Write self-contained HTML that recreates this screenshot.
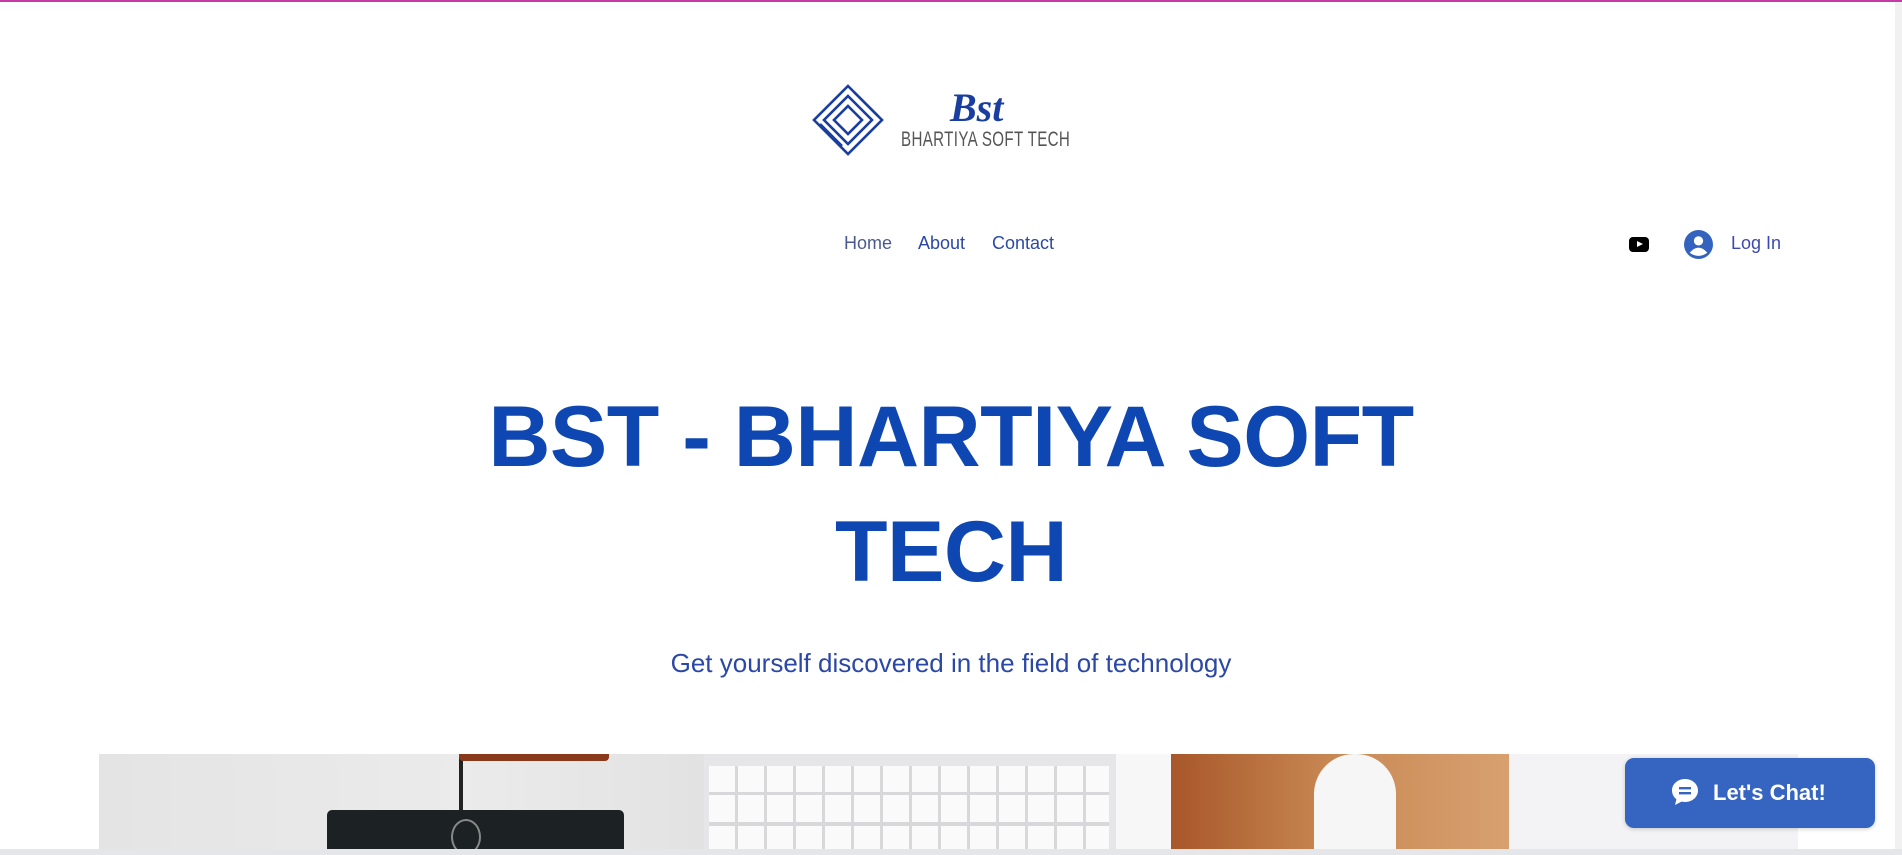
<!DOCTYPE html>
<html><head><meta charset="utf-8"><style>
*{margin:0;padding:0;box-sizing:border-box}
body{width:1902px;height:855px;overflow:hidden;background:#fff;font-family:"Liberation Sans",sans-serif;position:relative}
.a{position:absolute}
.nav{font-size:18px;color:#2b48a6;top:233px}
</style></head><body>
<div class="a" style="left:0;top:0;width:1902px;height:2px;background:#c43aa6"></div>
<div class="a" style="left:1895px;top:2px;width:7px;height:853px;background:#f1f1f1"></div>
<!-- logo -->
<svg class="a" style="left:812px;top:84px" width="72" height="72" viewBox="0 0 72 72" fill="none" stroke="#1a3ea0" stroke-width="2.6">
<path d="M36 2 L70 36 L36 70 L2 36 Z"/>
<path d="M36 12 L60 36 L36 60 L12 36 Z"/>
<path d="M36 22 L50 36 L36 50 L22 36 Z"/>
<path d="M42 8 L66 32 M8 40 L30 62"/>
</svg>
<div class="a" style="left:950px;top:84px;font-family:'Liberation Serif',serif;font-style:italic;font-weight:bold;font-size:40px;color:#1a3ea0">Bst</div>
<div class="a" style="left:901px;top:128px;font-size:21px;color:#555;letter-spacing:0.5px;transform:scaleX(0.72);transform-origin:left">BHARTIYA SOFT TECH</div>
<!-- nav -->
<div class="a nav" style="left:844px;color:#4a5a90">Home</div>
<div class="a nav" style="left:918px">About</div>
<div class="a nav" style="left:992px">Contact</div>
<div class="a" style="left:1629px;top:237px;width:20px;height:15px;background:#000;border-radius:4px"></div>
<div class="a" style="left:1637px;top:241px;width:0;height:0;border-left:6px solid #fff;border-top:3.5px solid transparent;border-bottom:3.5px solid transparent"></div>
<svg class="a" style="left:1684px;top:230px" width="29" height="29" viewBox="0 0 28 28"><circle cx="14" cy="14" r="14" fill="#3463bf"/><circle cx="14" cy="10.5" r="4.5" fill="#fff"/><path d="M5.5 22 Q14 12 22.5 22 Q14 28 5.5 22Z" fill="#fff"/></svg>
<div class="a nav" style="left:1731px;color:#3a48b0">Log In</div>
<!-- heading -->
<div class="a" style="left:0;width:1902px;top:380px;text-align:center;font-size:86px;line-height:115px;color:#0f47b2;font-weight:bold;letter-spacing:-0.5px">BST - BHARTIYA SOFT<br>TECH</div>
<div class="a" style="left:0;width:1902px;top:648px;text-align:center;font-size:26px;color:#2b48a6">Get yourself discovered in the field of technology</div>
<!-- image -->
<div class="a" style="left:99px;top:754px;width:1699px;height:101px;background:#f3f3f5;overflow:hidden">
<div class="a" style="left:0;top:0;width:605px;height:101px;background:linear-gradient(90deg,#e4e4e4,#ebebeb 60%,#e2e2e2)"></div>
<div class="a" style="left:360px;top:0;width:4px;height:60px;background:#222"></div>
<div class="a" style="left:360px;top:0;width:150px;height:7px;background:#8a3a1c;border-radius:0 0 4px 4px"></div>
<div class="a" style="left:228px;top:56px;width:297px;height:60px;background:#1c2124;border-radius:5px"></div>
<div class="a" style="left:352px;top:65px;width:30px;height:36px;border:2px solid #888;border-radius:50%"></div>
<div class="a" style="left:605px;top:0;width:412px;height:101px;background:#e6e6e8"></div>
<div class="a" style="left:610px;top:12px;width:400px;height:100px;background:repeating-linear-gradient(90deg,#fafafa 0 26px,#d8d8da 26px 29px)"></div>
<div class="a" style="left:610px;top:38px;width:400px;height:3px;background:#d8d8da"></div>
<div class="a" style="left:610px;top:68px;width:400px;height:4px;background:#d8d8da"></div>
<div class="a" style="left:1017px;top:0;width:55px;height:101px;background:#f7f7f7"></div>
<div class="a" style="left:1072px;top:0;width:338px;height:101px;background:linear-gradient(90deg,#a8572a,#c98a55 50%,#d8a070)"></div>
<div class="a" style="left:1215px;top:0;width:82px;height:110px;background:#f6f6f6;border-radius:40px 40px 0 0"></div>
</div>
<div class="a" style="left:0;top:849px;width:1902px;height:6px;background:#e4e6ea"></div>
<!-- chat -->
<div class="a" style="left:1625px;top:758px;width:250px;height:70px;background:#3565c0;border-radius:9px;box-shadow:0 1px 4px rgba(0,0,0,.2)"></div>
<svg class="a" style="left:1669px;top:776px" width="32" height="32" viewBox="0 0 32 32"><path d="M16 3C8.8 3 3 8 3 14.5c0 3.5 1.7 6.6 4.4 8.7L6 29l6.5-3.4c1.1.3 2.3.4 3.5.4 7.2 0 13-5 13-11.5S23.2 3 16 3z" fill="#fff"/><rect x="10" y="11" width="12" height="2.4" fill="#3565c0"/><rect x="10" y="16" width="12" height="2.4" fill="#3565c0"/></svg>
<div class="a" style="left:1713px;top:780px;font-size:22px;font-weight:bold;color:#fff">Let's Chat!</div>
</body></html>
